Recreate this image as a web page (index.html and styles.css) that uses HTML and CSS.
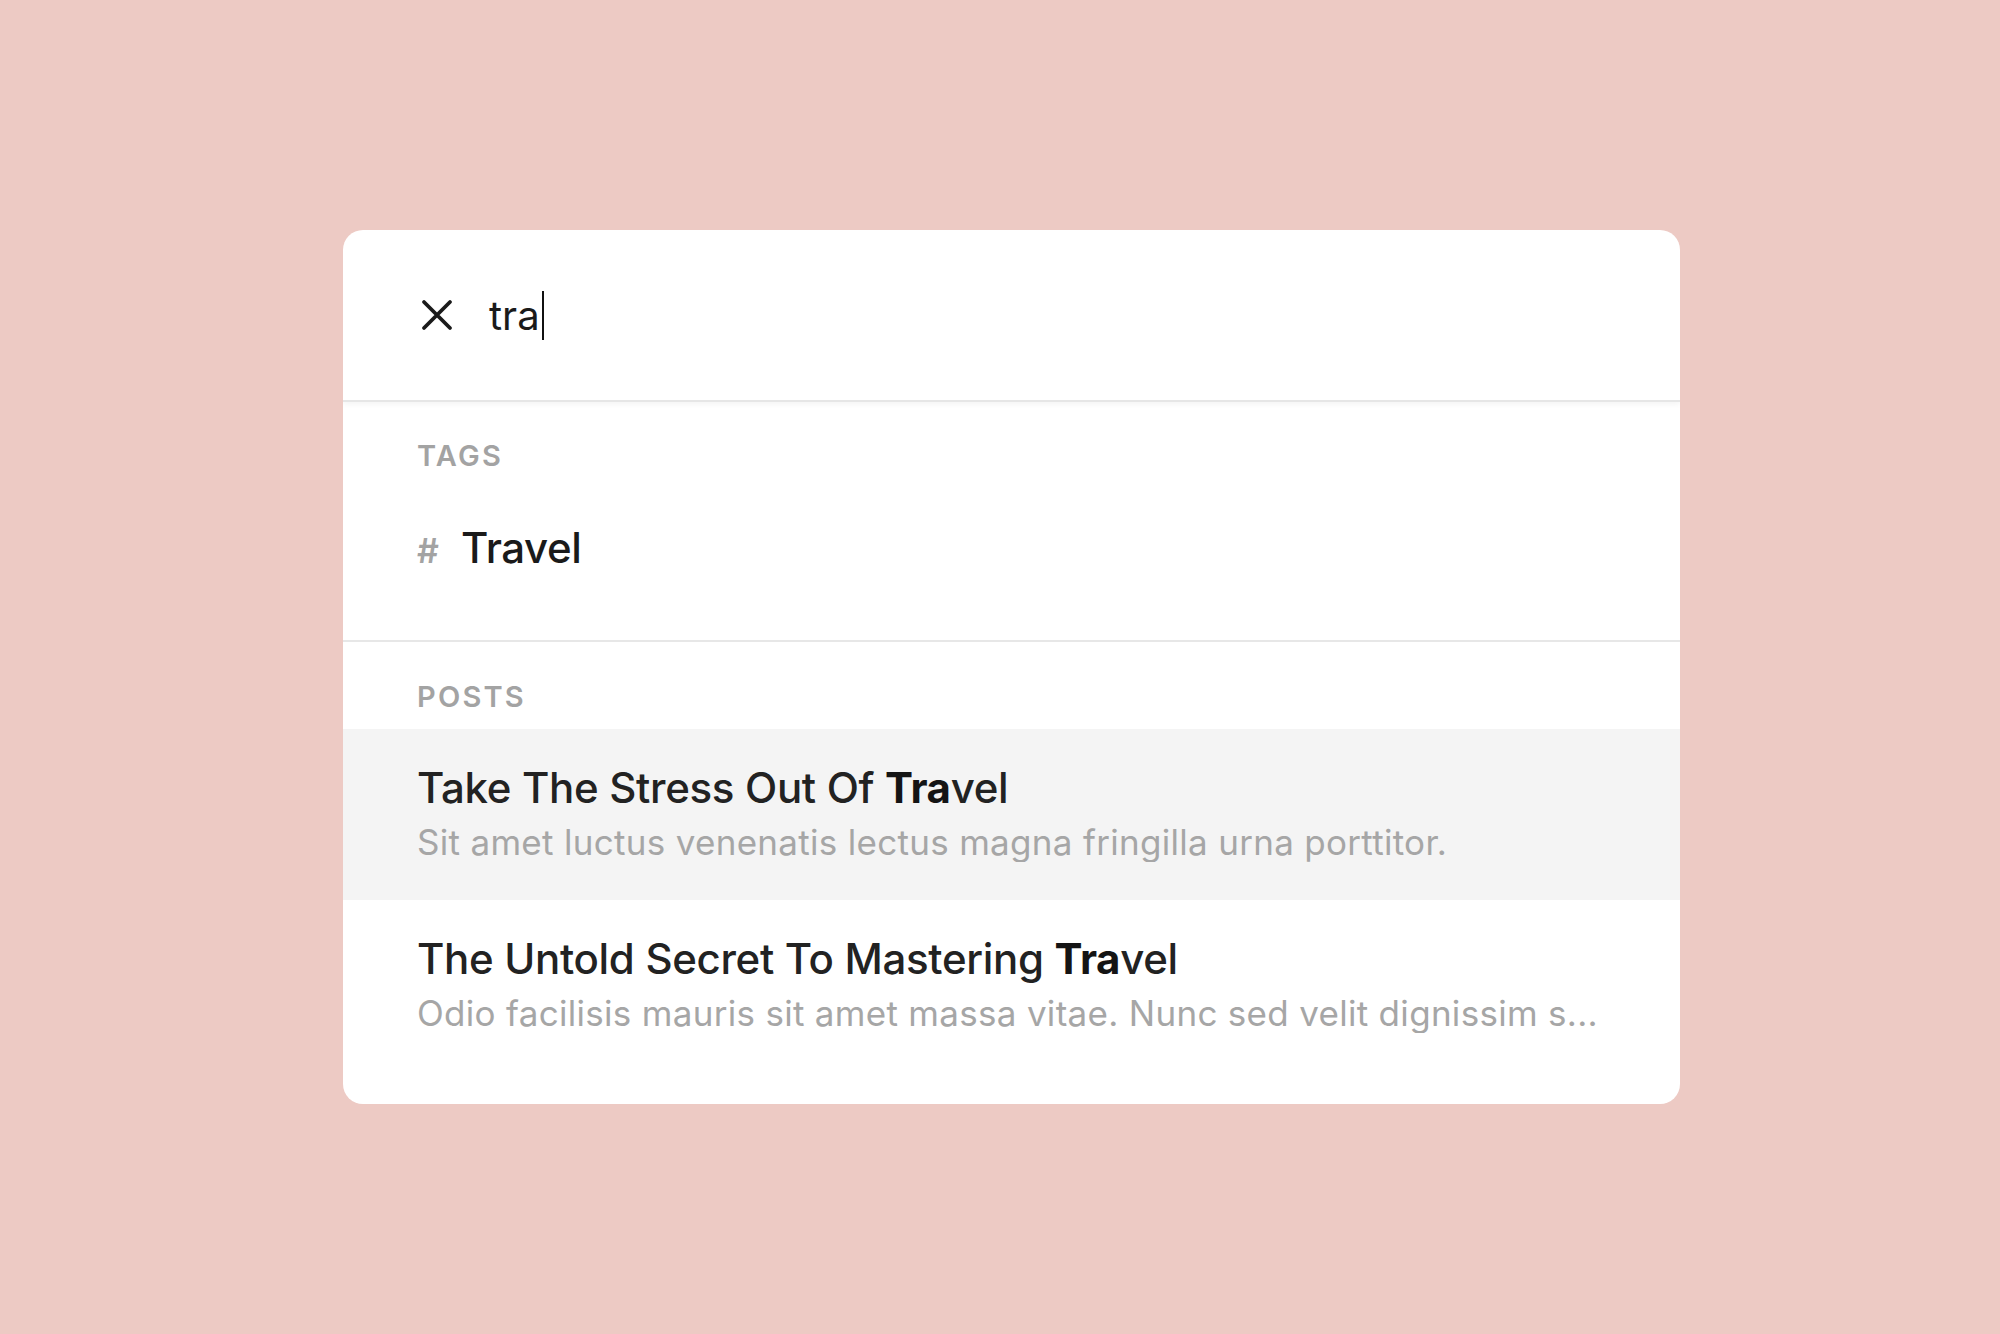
FILE: index.html
```html
<!DOCTYPE html>
<html lang="en">
<head>
<meta charset="utf-8">
<title>Search</title>
<link rel="stylesheet" href="styles.css">
</head>
<body>
<div class="card">
  <div class="search">
    <svg class="close" width="34" height="34" viewBox="0 0 34 34" aria-hidden="true">
      <path d="M4 4 L30 30 M30 4 L4 30" stroke="#1a1a1a" stroke-width="3.8" stroke-linecap="round" fill="none"/>
    </svg>
    <div class="query">tra<span class="caret"></span></div>
  </div>
  <div class="section tags">
    <div class="label">TAGS</div>
    <div class="tag"><span class="hash">#</span><span class="tag-name">Travel</span></div>
  </div>
  <div class="section posts">
    <div class="label">POSTS</div>
    <div class="results">
      <div class="post active">
        <div class="title">Take The Stress Out Of <b>Tra</b>vel</div>
        <div class="desc">Sit amet luctus venenatis lectus magna fringilla urna porttitor.</div>
      </div>
      <div class="post">
        <div class="title">The Untold Secret To Mastering <b>Tra</b>vel</div>
        <div class="desc">Odio facilisis mauris sit amet massa vitae. Nunc sed velit dignissim s...</div>
      </div>
    </div>
  </div>
</div>
</body>
</html>
```
FILE: styles.css
```css
html, body {
  margin: 0;
  padding: 0;
}
body {
  background: #edcac4;
  font-family: Inter, "Noto Sans", "Liberation Sans", sans-serif;
  min-height: 1334px;
  box-sizing: border-box;
  padding: 230px 0 0 343px;
}
.card {
  width: 1337px;
  background: #ffffff;
  border-radius: 20px;
  overflow: hidden;
  padding-bottom: 33px;
}
.search {
  height: 170px;
  display: flex;
  align-items: center;
  padding-left: 77px;
  border-bottom: 2px solid #e6e6e6;
  box-shadow: 0 2px 6px rgba(0, 0, 0, 0.05);
  position: relative;
  z-index: 1;
}
.close {
  flex: none;
  display: block;
}
.query {
  margin-left: 35px;
  font-size: 40px;
  color: #1a1a1a;
  display: flex;
  align-items: center;
  line-height: 49px;
}
.caret {
  display: inline-block;
  width: 2px;
  height: 49px;
  background: #111;
  margin-left: 2px;
}
.section {
  padding-top: 37px;
}
.tags {
  padding-bottom: 64px;
  border-bottom: 2px solid #e7e7e7;
}
.posts {
  padding-top: 38px;
}
.label {
  padding-left: 74px;
  font-size: 29px;
  line-height: 34px;
  font-weight: 600;
  letter-spacing: 2.2px;
  color: #a3a3a3;
}
.tag {
  margin-top: 50px;
  padding-left: 74px;
  display: flex;
  align-items: baseline;
  line-height: 50px;
}
.hash {
  font-size: 34px;
  font-weight: 600;
  color: #a3a3a3;
  width: 44px;
}
.tag-name {
  font-size: 42px;
  font-weight: 500;
  letter-spacing: -0.4px;
  color: #1a1a1a;
}
.results {
  margin-top: 15px;
}
.post {
  padding: 34px 74px 38px;
}
.post.active {
  background: #f4f4f4;
}
.title {
  font-size: 42px;
  line-height: 50px;
  font-weight: 500;
  letter-spacing: -0.32px;
  color: #222222;
  white-space: nowrap;
}
.title b {
  font-weight: 700;
  color: #141414;
}
.desc {
  margin-top: 9px;
  font-size: 35px;
  line-height: 40px;
  letter-spacing: 0.3px;
  color: #a6a6a6;
  white-space: nowrap;
  overflow: hidden;
  text-overflow: ellipsis;
}
```
